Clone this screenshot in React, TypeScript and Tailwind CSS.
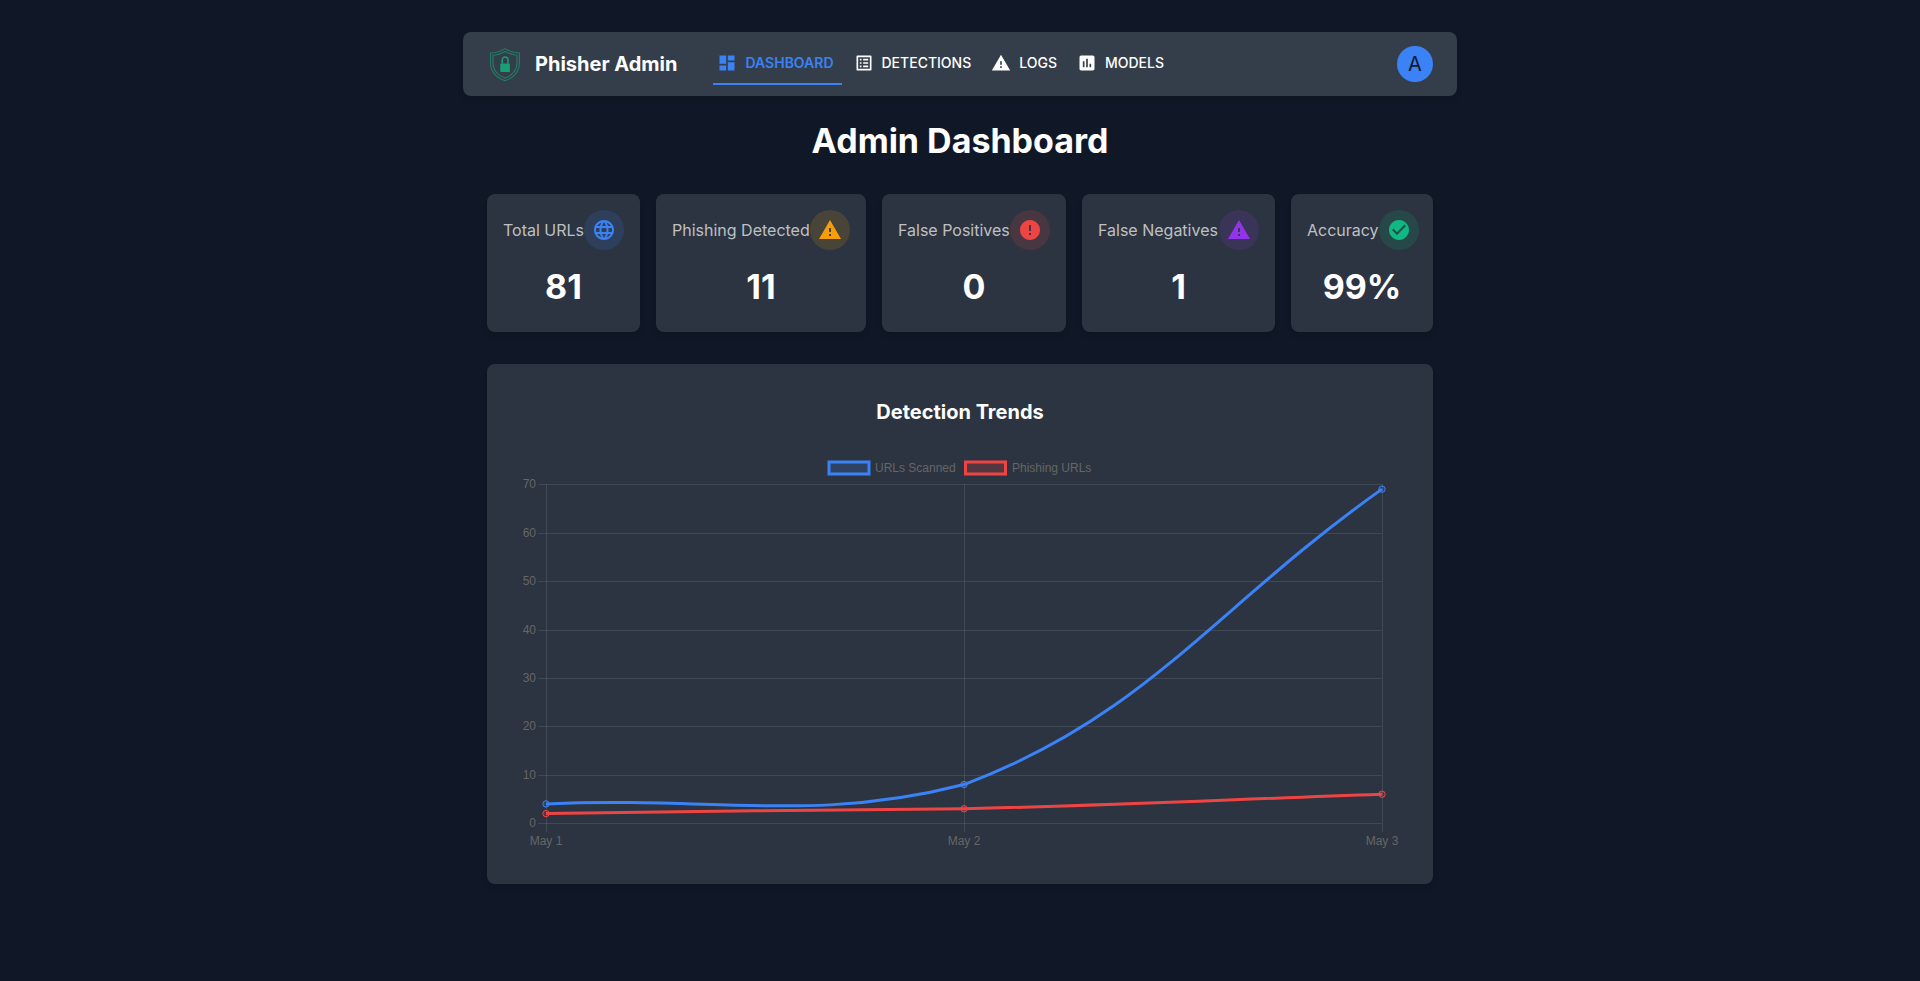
import React from "react";
import {
  MdDashboard,
  MdListAlt,
  MdWarning,
  MdAssessment,
  MdLanguage,
  MdError,
  MdCheckCircle,
} from "react-icons/md";

const tabs = [
  { label: "Dashboard", Icon: MdDashboard, active: true },
  { label: "Detections", Icon: MdListAlt, active: false },
  { label: "Logs", Icon: MdWarning, active: false },
  { label: "Models", Icon: MdAssessment, active: false },
];

const stats = [
  { label: "Total URLs", value: "81", Icon: MdLanguage, icon: "text-[#3b82f6]", circle: "bg-[#3b82f6]/15", width: "w-[153px]" },
  { label: "Phishing Detected", value: "11", Icon: MdWarning, icon: "text-[#f59e0b]", circle: "bg-[#f59e0b]/15", width: "w-[210px]" },
  { label: "False Positives", value: "0", Icon: MdError, icon: "text-[#ef4444]", circle: "bg-[#ef4444]/15", width: "w-[184px]" },
  { label: "False Negatives", value: "1", Icon: MdWarning, icon: "text-[#9333ea]", circle: "bg-[#9333ea]/15", width: "w-[193px]" },
  { label: "Accuracy", value: "99%", Icon: MdCheckCircle, icon: "text-[#10b981]", circle: "bg-[#10b981]/15", width: "w-[142px]" },
];

const yTicks = [70, 60, 50, 40, 30, 20, 10, 0];
const y = (v: number) => 823.3 - 4.843 * v;

function ShieldLogo() {
  return (
    <svg width="36" height="36" viewBox="0 0 36 36" fill="none" className="shrink-0">
      <g stroke="#10b981" strokeWidth="1.1" strokeOpacity="0.5">
        <path d="M18 2.6 C22 5.2 27 6.8 32.4 7 V17.5 C32.4 25.5 26.5 32 18 34.6 C9.5 32 3.6 25.5 3.6 17.5 V7 C9 6.8 14 5.2 18 2.6 Z" />
        <path d="M18 5.4 C21.6 7.5 25.8 8.9 30 9.2 V17.5 C30 24.2 25 29.8 18 32.1 C11 29.8 6 24.2 6 17.5 V9.2 C10.2 8.9 14.4 7.5 18 5.4 Z" />
      </g>
      <rect x="13.3" y="17.6" width="9.6" height="8.4" rx="0.8" fill="#10b981" fillOpacity="0.8" />
      <path d="M15.2 17.6 V14 A2.9 2.9 0 0 1 21 14 V17.6" stroke="#10b981" strokeOpacity="0.8" strokeWidth="1.5" />
    </svg>
  );
}

function TrendChart() {
  const blue = `M546 ${y(4)} C713.2 ${y(5.6)} 813.6 823.3 964 ${y(8)} C1148 715.4 1214.8 607.4 1382 ${y(69)}`;
  const red = `M546 ${y(2)} C713.2 ${y(2.4)} 796.8 ${y(2.8)} 964 ${y(3)} C1131.2 ${y(3.8)} 1214.8 ${y(4.8)} 1382 ${y(6)}`;
  const textStyle = { fontFamily: '"Liberation Sans", Arial, sans-serif', fontSize: 12 };
  return (
    <svg viewBox="511 450 898 410" className="block w-[898px] h-[410px]" fill="none">
      <g stroke="#ffffff" strokeOpacity="0.1" strokeWidth="1">
        {yTicks.map((t) => (
          <line key={t} x1="538" x2="1382" y1={Math.round(y(t)) + 0.5} y2={Math.round(y(t)) + 0.5} />
        ))}
        {[546, 964, 1382].map((x) => (
          <line key={x} x1={x + 0.5} x2={x + 0.5} y1="484" y2="832" />
        ))}
      </g>
      <g fill="#666666" style={textStyle}>
        {yTicks.map((t) => (
          <text key={t} x="536" y={y(t) + 4} textAnchor="end">{t}</text>
        ))}
        <text x="546" y="845" textAnchor="middle">May 1</text>
        <text x="964" y="845" textAnchor="middle">May 2</text>
        <text x="1382" y="845" textAnchor="middle">May 3</text>
        <text x="875" y="471.5">URLs Scanned</text>
        <text x="1012" y="471.5">Phishing URLs</text>
      </g>
      <rect x="829" y="462" width="40" height="12" fill="#3b82f6" fillOpacity="0.2" stroke="#3b82f6" strokeWidth="3" />
      <rect x="965.5" y="462" width="40" height="12" fill="#ef4444" fillOpacity="0.2" stroke="#ef4444" strokeWidth="3" />
      <path d={blue} stroke="#3b82f6" strokeWidth="3" />
      <path d={red} stroke="#ef4444" strokeWidth="3" />
      {[[546, 4], [964, 8], [1382, 69]].map(([x, v]) => (
        <circle key={x} cx={x} cy={y(v)} r="3.2" fill="#3b82f6" fillOpacity="0.2" stroke="#3b82f6" />
      ))}
      {[[546, 2], [964, 3], [1382, 6]].map(([x, v]) => (
        <circle key={x} cx={x} cy={y(v)} r="3.2" fill="#ef4444" fillOpacity="0.2" stroke="#ef4444" />
      ))}
    </svg>
  );
}

export default function App() {
  return (
    <div className="min-h-screen bg-[#101827] pt-8 text-white font-['Inter',sans-serif]">
      <nav className="mx-auto flex h-16 w-[994px] items-center rounded-lg bg-[#343e4a] px-6 shadow-md">
        <ShieldLogo />
        <span className="ml-3 text-xl font-bold leading-none">Phisher Admin</span>
        <div className="ml-9 flex items-center gap-2">
          {tabs.map(({ label, Icon, active }) => (
            <div
              key={label}
              className={`flex h-[42px] items-center border-b-2 pl-1 pr-2 text-sm uppercase ${
                active ? "border-[#3b82f6] font-semibold text-[#3b82f6]" : "border-transparent font-medium text-white"
              }`}
            >
              <Icon size={20} className="mr-2 shrink-0" />
              {label}
            </div>
          ))}
        </div>
        <div className="ml-auto flex h-9 w-9 items-center justify-center rounded-full bg-[#3b82f6] text-xl text-[#111827]">
          A
        </div>
      </nav>

      <h1 className="mt-6 text-center text-[34px] font-bold leading-[42px]">Admin Dashboard</h1>

      <div className="mx-auto mt-[32px] w-[946px]">
        <div className="flex gap-4">
          {stats.map(({ label, value, Icon, icon, circle, width }) => (
            <div key={label} className={`rounded-lg bg-[#2b3440] px-4 pt-4 pb-6 shadow-md ${width}`}>
              <div className="flex items-center justify-between">
                <span className="whitespace-nowrap text-base text-white/70">{label}</span>
                <span className={`flex h-10 w-10 shrink-0 items-center justify-center rounded-full ${circle}`}>
                  <Icon size={24} className={icon} />
                </span>
              </div>
              <div className="mt-[15px] text-center text-[34px] font-bold leading-[43px]">{value}</div>
            </div>
          ))}
        </div>

        <div className="mt-8 rounded-lg bg-[#2b3440] px-6 pt-[33px] pb-6 shadow-md">
          <h2 className="mb-[23px] text-center text-xl font-bold leading-[30px]">Detection Trends</h2>
          <TrendChart />
        </div>
      </div>
    </div>
  );
}
